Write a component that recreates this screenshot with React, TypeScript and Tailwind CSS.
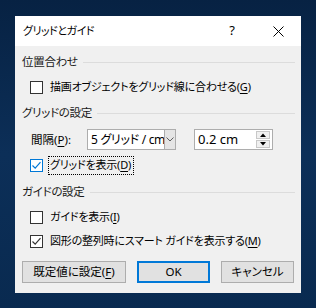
import React from "react";

const font = "[font-family:'Noto_Sans','Noto_Sans_CJK_JP',sans-serif] [font-feature-settings:'palt']";

function Check({ checked, focus }: { checked?: boolean; focus?: boolean }) {
    const color = focus ? "#0078d7" : "#333333";
    return (
        <div
            className={`w-[13px] h-[13px] bg-white border flex items-center justify-center shrink-0 ${focus ? "border-[#0078d7]" : "border-[#333333]"}`}
        >
            {checked && (
                <svg width="11" height="11" viewBox="0 0 11 11">
                    <path d="M1.5 5.5 L4.2 8.2 L9.5 2.2" fill="none" stroke={color} strokeWidth="1.2" />
                </svg>
            )}
        </div>
    );
}

function Heading({ text }: { text: string }) {
    return (
        <div className="flex items-center h-[20px] pl-[7px] pr-[6px]">
            <span className="text-[11.5px] tracking-[-0.3px] text-[#1a1a1a] whitespace-nowrap">{text}</span>
            <div className="flex-1 h-px bg-[#dcdcdc] ml-[5px]" />
        </div>
    );
}

function Mn({ k }: { k: string }) {
    return (
        <>
            (<span className="underline underline-offset-2">{k}</span>)
        </>
    );
}

export default function App() {
    return (
        <div className={`w-[316px] h-[308px] bg-gradient-to-b from-[#072243] via-[#0c2f58] to-[#092a50] pt-[16px] pl-[15px] ${font}`}>
            <div className="w-[286px] h-[277px] bg-[#f0f0f0] flex flex-col">
                {/* title bar */}
                <div className="h-[30px] bg-white flex items-center shrink-0">
                    <span className="pl-[8px] text-[11px] tracking-[-0.5px] text-[#000] flex-1">グリッドとガイド</span>
                    <div className="w-[46px] h-[30px] flex items-center justify-center text-[13px] text-black">?</div>
                    <div className="w-[46px] h-[30px] flex items-center justify-center">
                        <svg width="11" height="11" viewBox="0 0 11 11">
                            <path d="M0.5 0.5 L10.5 10.5 M10.5 0.5 L0.5 10.5" stroke="#000" strokeWidth="1" />
                        </svg>
                    </div>
                </div>

                <div className="mt-[6px]">
                    <Heading text="位置合わせ" />
                </div>

                <div className="mt-[5px] h-[20px] flex items-center pl-[15px] gap-[7px] text-[11px] tracking-[-0.2px] text-black">
                    <Check />
                    <span className="whitespace-nowrap">
                        描画オブジェクトをグリッド線に合わせる<Mn k="G" />
                    </span>
                </div>

                <div className="mt-[6px]">
                    <Heading text="グリッドの設定" />
                </div>

                <div className="mt-[6px] h-[21px] flex items-center text-black">
                    <span className="pl-[16px] w-[72px] text-[11.5px] whitespace-nowrap">
                        間隔<Mn k="P" />:
                    </span>
                    <div className="w-[89px] h-[21px] bg-white border border-[#adadad] flex items-stretch">
                        <span className="flex-1 pl-[3px] text-[12px] tracking-[-0.3px] leading-[19px] whitespace-nowrap overflow-hidden">5 グリッド / cm</span>
                        <div className="w-[11px] bg-[#e5e5e5] border-l border-[#adadad] flex items-center justify-center">
                            <svg width="8" height="5" viewBox="0 0 8 5">
                                <path d="M0.5 0.5 L4 4 L7.5 0.5" fill="none" stroke="#606060" strokeWidth="1" />
                            </svg>
                        </div>
                    </div>
                    <div className="ml-[18px] w-[79px] h-[21px] bg-white border border-[#adadad] flex items-stretch">
                        <span className="flex-1 pl-[3px] text-[13px] leading-[19px] whitespace-nowrap">0.2 cm</span>
                        <div className="w-[15px] flex flex-col items-center justify-center gap-[1px] mr-[2px]">
                            <div className="w-[14px] h-[8px] bg-[#f0f0f0] border border-[#c8c8c8] flex items-center justify-center">
                                <svg width="6" height="4" viewBox="0 0 6 4">
                                    <path d="M0 4 L3 0.5 L6 4 Z" fill="#000" />
                                </svg>
                            </div>
                            <div className="w-[14px] h-[8px] bg-[#f0f0f0] border border-[#c8c8c8] flex items-center justify-center">
                                <svg width="6" height="4" viewBox="0 0 6 4">
                                    <path d="M0 0 L3 3.5 L6 0 Z" fill="#000" />
                                </svg>
                            </div>
                        </div>
                    </div>
                </div>

                <div className="mt-[6px] h-[19px] flex items-center pl-[15px] gap-[5px] text-[11px] tracking-[-0.2px] text-black">
                    <Check checked focus />
                    <span className="h-[19px] border border-dotted border-black flex items-center pl-[1px] pr-[2px] whitespace-nowrap">
                        グリッドを表示<Mn k="D" />
                    </span>
                </div>

                <div className="mt-[7px]">
                    <Heading text="ガイドの設定" />
                </div>

                <div className="mt-[5px] h-[20px] flex items-center pl-[15px] gap-[7px] text-[11px] tracking-[-0.2px] text-black">
                    <Check />
                    <span className="whitespace-nowrap">
                        ガイドを表示<Mn k="I" />
                    </span>
                </div>

                <div className="mt-[4px] h-[20px] flex items-center pl-[15px] gap-[7px] text-[11px] tracking-[-0.2px] text-black">
                    <Check checked />
                    <span className="whitespace-nowrap">
                        図形の整列時にスマート ガイドを表示する<Mn k="M" />
                    </span>
                </div>

                <div className="mt-[10px] flex items-center pl-[7px] text-[11.5px] text-black">
                    <button className="w-[104px] h-[22px] bg-[#e1e1e1] border border-[#adadad] whitespace-nowrap">
                        既定値に設定<Mn k="F" />
                    </button>
                    <button className="ml-[11px] w-[73px] h-[22px] bg-[#e1e1e1] border-2 border-[#0078d7]">OK</button>
                    <button className="ml-[11px] w-[73px] h-[22px] bg-[#e1e1e1] border border-[#adadad]">キャンセル</button>
                </div>
            </div>
        </div>
    );
}
